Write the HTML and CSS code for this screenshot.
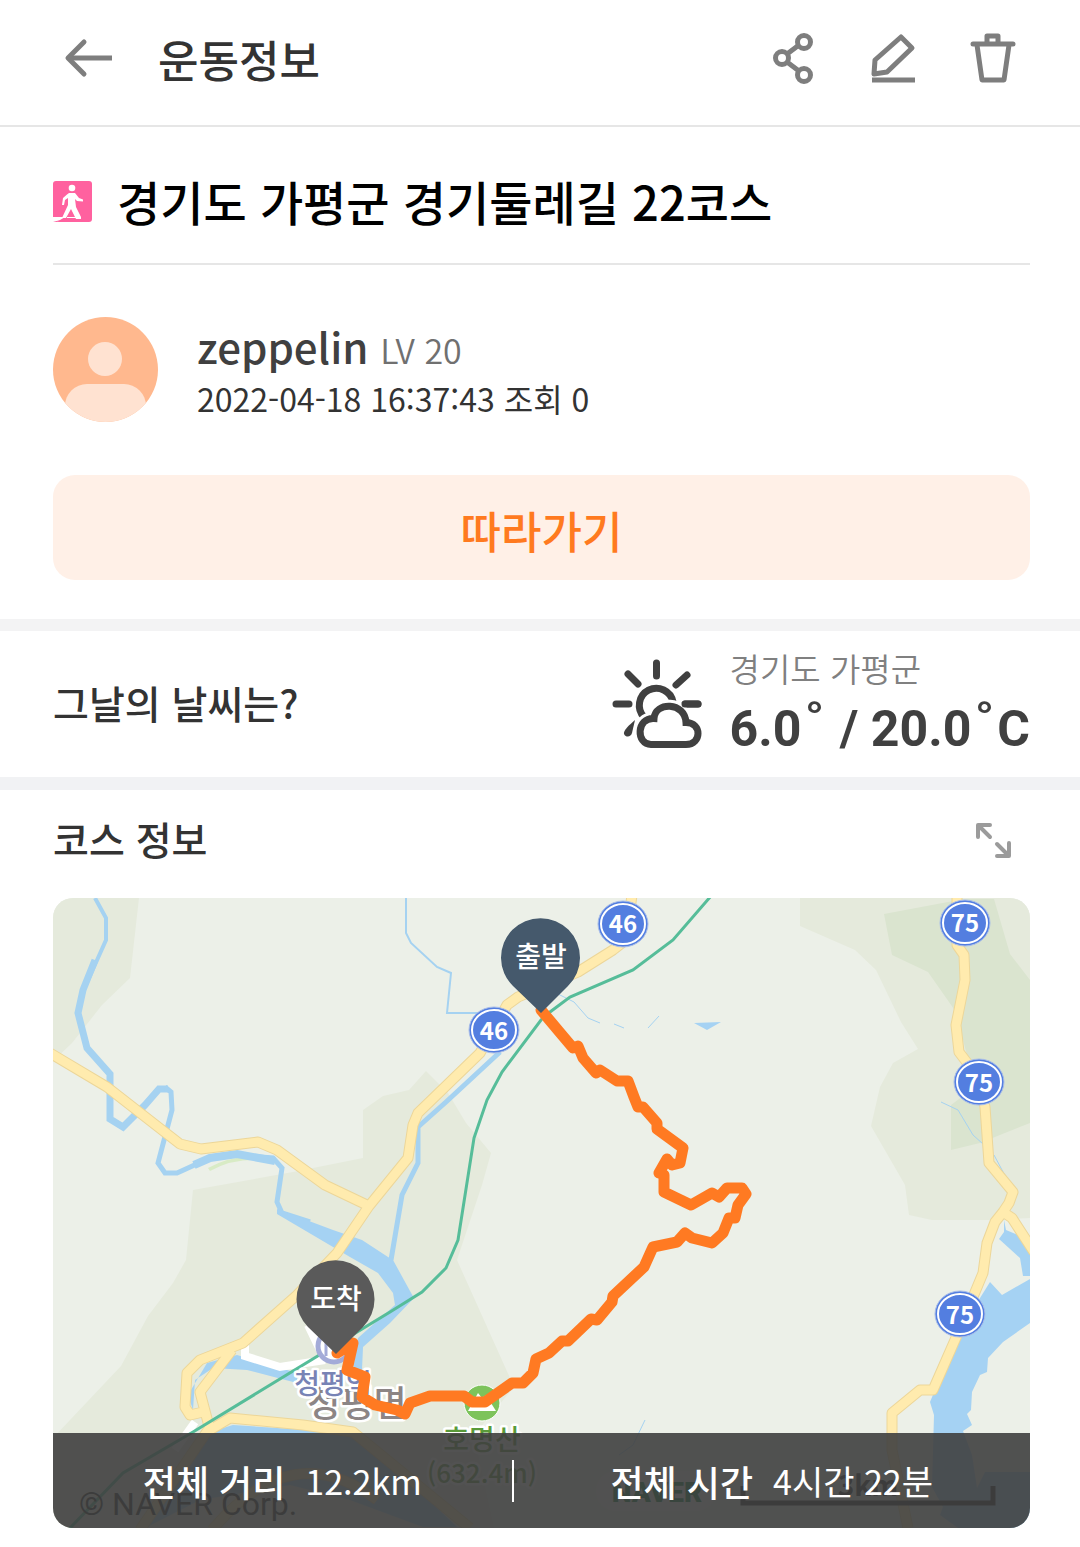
FILE: index.html
```html
<!DOCTYPE html>
<html lang="ko">
<head>
<meta charset="utf-8">
<meta name="viewport" content="width=device-width, initial-scale=1">
<title>운동정보</title>
<link rel="stylesheet" href="styles.css">
</head>
<body>
<header class="topbar">
  <button class="icon-button" type="button" aria-label="뒤로">
    <svg width="48" height="52" viewBox="0 0 48 52" fill="none" stroke="#7e7e7e" stroke-width="5"><path d="M48 25H5"/><path d="M20 9L4 25l16 16" stroke-linecap="round" stroke-linejoin="round"/></svg>
  </button>
  <h1 class="topbar-title">운동정보</h1>
  <div class="topbar-actions">
    <button class="icon-button" type="button" aria-label="공유">
      <svg width="48" height="52" viewBox="0 0 48 52" fill="none" stroke="#7e7e7e" stroke-width="5"><circle cx="14" cy="25" r="6.500"/><circle cx="36" cy="9" r="6.500"/><circle cx="36" cy="42" r="6.500"/><path d="M19 21l12-9M19 29l12 9"/></svg>
    </button>
    <button class="icon-button" type="button" aria-label="수정">
      <svg width="48" height="52" viewBox="0 0 48 52" fill="none" stroke="#7e7e7e" stroke-width="5" stroke-linejoin="round"><path d="M33 4l11 11-25 24-13 2 1-14z"/><path d="M4 47h43"/></svg>
    </button>
    <button class="icon-button" type="button" aria-label="삭제">
      <svg width="48" height="52" viewBox="0 0 48 52" fill="none" stroke="#7e7e7e" stroke-width="5" stroke-linejoin="round" stroke-linecap="round"><path d="M5 11h40M19 10V3h11v7M9 12l5 35h22l5-35"/></svg>
    </button>
  </div>
</header>

<main>
  <article class="post">
    <div class="post-heading">
      <svg class="walk-icon" width="39" height="41" viewBox="0 0 39 41"><rect width="39" height="41" rx="3" fill="#ff619f"/><circle cx="19" cy="7" r="3.300" fill="#fff"/><path d="M16 12h6l4 5 4 1.500v2l-6-.500-2-2 1 8 5 10v2h-5l-5-10-5 9h-4l6-13v-7l-3 2-1 5H9l1-7 4-3.500z" fill="#fff"/><path d="M0 36h12l-8 5H0z" fill="#fff"/><path d="M0 41h4l7-3z" fill="#ff619f"/><path d="M14 36.500h14" stroke="#fff"/></svg>
      <h2 class="post-title">경기도 가평군 경기둘레길 22코스</h2>
    </div>
    <div class="author">
      <svg class="avatar" width="105" height="105" viewBox="0 0 105 105"><clipPath id="avatar-clip"><circle cx="52.500" cy="52.500" r="52.500"/></clipPath><g clip-path="url(#avatar-clip)"><path fill="#ffb88e" d="M0 0h105v105H0z"/><circle cx="52" cy="42" r="17" fill="#ffe2d1"/><rect x="12" y="67" width="81" height="60" rx="22" fill="#ffe2d1"/></g></svg>
      <div class="author-text">
        <p class="author-name"><strong>zeppelin</strong> <span class="level">LV 20</span></p>
        <p class="author-meta">2022-04-18 16:37:43 조회 0</p>
      </div>
    </div>
    <button class="follow" type="button">따라가기</button>
  </article>

  <section class="weather">
    <h2 class="section-title">그날의 날씨는?</h2>
    <svg class="weather-icon" width="90" height="90" viewBox="0 0 90 90" fill="none" stroke="#404040" stroke-width="7" stroke-linecap="round"><path d="M44.500 4v13M16 15l10 10M75 16L64 26M4 45h13M73 45h13"/><path d="M32 58a17 17 0 1 1 29-15" stroke-linecap="butt"/><path d="M39 85.500h35c16 0 16-22 0-22-1-21-31-21-32-4-18-1-18 26-3 26z" stroke="#fff" stroke-width="13"/><path d="M39 85.500h35c16 0 16-22 0-22-1-21-31-21-32-4-18-1-18 26-3 26z" fill="#fff"/><path d="M73 45h13"/><path d="M23 61c-6 5-12 11-11 14 2 4 7 3 8-1z" fill="#404040" stroke="none"/></svg>
    <div class="weather-data">
      <p class="place">경기도 가평군</p>
      <p class="temperature">6.0<span class="degree">˚</span> / 20.0<span class="degree">˚</span>C</p>
    </div>
  </section>

  <section class="course">
    <div class="course-heading">
      <h2 class="section-title">코스 정보</h2>
      <button class="icon-button" type="button" aria-label="지도 확대">
        <svg width="36" height="36" viewBox="0 0 36 36" fill="none" stroke="#9b9b9b" stroke-width="4" stroke-linecap="round" stroke-linejoin="round"><path d="M2 15V3h12M3 4l11 11M33 21v13H21M32 33L21 22"/></svg>
      </button>
    </div>
    <div class="map">
      <svg class="map-canvas" viewBox="53 898 977 630" preserveAspectRatio="xMidYMid slice" role="img" aria-label="코스 지도">
        <path class="land" d="M53 898h977v630H53z"/>
        <g class="hills">
          <path d="M53 898h86l-9 80-28 27-30 38-19 18z"/>
          <path d="M800 898h230v320l-38 2h-60l-23-5-4-30-34-59 9-39 13-24 25-14-17-27-25-52-21-20-55-24z"/>
          <path d="M363 1110l20-14 26-6 17-19 22 22 18 30 25 30-9 32-25 75 57 127-40 48 20 93H53v-90l68-72 27-50 25-33 13-23 7-70 100-18 70-14z"/>
        </g>
        <path class="forest" d="M884 914l80-15h30l16 55 20 26v143l-50 20-29 7v-45l24-18-19-75-28-40-36-17z"/>
        <path class="park" d="M208 1168q30-16 55-8-30-2-53 11z"/>
        <g class="water-line">
          <path stroke-width="4" d="M95 898L106 918V940L85 987"/>
          <path stroke-width="7" d="M95 960L83 990L78 1013L87 1048L110 1074V1119L123 1127L145 1105L159 1089H168"/>
          <path stroke-width="5" d="M165 1087L171 1092L172 1110L158 1163L165 1173H177L210 1158L237 1155L273 1158L282 1168L277 1202L282 1213L310 1222"/>
          <path stroke-width="8" d="M194 1165L210 1158L237 1154L275 1161"/>
          <path stroke-width="5" d="M500 1052L446 1102L418 1127V1163L402 1195L391 1260"/>
          <path stroke-width="2" d="M406 898V933L411 943L437 967L451 973L447 1013H480"/>
          <path stroke-width="1" d="M558 994L574 1002L588 1018L600 1023M614 1024L624 1028M648 1028L659 1016M645 1420L633 1445L619 1455M941 1102L958 1110L973 1135L983 1144M994 1155L1009 1183"/>
        </g>
        <g class="water">
          <path d="M277 1209L333 1230L362 1240L388 1257L393 1260L410 1291L414 1298L390 1323L363 1347L362 1370H353L358 1338L395 1305L393 1293L378 1273L350 1257L277 1214z"/>
          <path d="M207 1363L237 1355L297 1373V1383L247 1370L213 1368L195 1380L193 1410L188 1395z"/>
          <path d="M210 1432L233 1425L353 1433L390 1463L457 1527H423L350 1500L290 1485L200 1500L147 1527z"/>
          <path d="M694 1023l27-1-14 8z"/>
          <path d="M999 1239L1004 1232V1220L1006 1230L1030 1240V1276H1023L1020 1258z"/>
          <path d="M990 1282L1002 1295L1030 1279V1323L1003 1342L988 1358L987 1372L980 1375L972 1392L971 1410L967 1414L972 1425L963 1431L972 1455L977 1488L985 1472H1030V1528H958L940 1515L943 1507L932 1487L934 1415L930 1402L960 1330z"/>
        </g>
        <g class="street"><path d="M245 1345V1356L280 1367L325 1360M195 1422L175 1450M308 1325L320 1350"/></g>
        <g class="road road-edge">
          <path id="road-a" d="M50 1053L107 1087L180 1144L201 1149L258 1142L277 1150L325 1185L369 1206"/>
          <path id="road-b" d="M632 895L626 940L613 950L578 972L518 997L507 1005L480 1053L418 1113L413 1125L408 1158L369 1206L337 1253L297 1295L243 1343L200 1360L187 1373L185 1407L190 1415L203 1412M232 1350L200 1392L210 1430L230 1418L303 1425L353 1432L470 1528"/>
          <path id="road-c" d="M957 895V945L964 955L965 980L956 1025L959 1052L978 1077L985 1107L989 1163L1013 1192L1009 1203L1003 1212L995 1222L987 1243L983 1273L958 1333L933 1390H920L892 1413V1450L908 1528M1003 1212L1012 1218L1034 1252"/>
          <path id="road-d" d="M208 1430L140 1530M212 1530q80-95 165-30"/>
        </g>
        <g class="road"><use href="#road-a"/><use href="#road-b"/><use href="#road-c"/><use href="#road-d"/></g>
        <path class="rail" d="M711 896L673 940L633 970L570 997L550 1012L541 1020L502 1072L487 1100L474 1138L458 1240L446 1268L422 1292L390 1312L193 1432L123 1473L70 1528"/>
        <g class="shields">
          <g id="shield"><ellipse class="shield-rim" cx="623" cy="924" rx="25" ry="23"/><ellipse class="shield-face" cx="623" cy="924" rx="22" ry="20"/></g>
          <use href="#shield" x="-129" y="106"/><use href="#shield" x="342" y="-1"/><use href="#shield" x="356" y="158"/><use href="#shield" x="337" y="390"/>
          <text x="623" y="933">46</text><text x="494" y="1040">46</text><text x="965" y="932">75</text><text x="979" y="1092">75</text><text x="960" y="1324">75</text>
        </g>
        <text class="label town" x="357" y="1417">청평면</text>
        <circle cx="334" cy="1346" r="16" fill="#fff" stroke="#a3abd8" stroke-width="5"/><path d="M326 1336v20M334 1344v8" stroke="#a3abd8" stroke-width="3"/>
        <text class="label station" x="333" y="1394">청평역</text>
        <circle cx="482" cy="1403" r="18" fill="#7dc35b" stroke="#fff"/><path d="M468 1411l10-18 4 5 4-3 10 16z" fill="#fff"/>
        <text class="label peak" x="482" y="1450">호명산</text><text class="label height" x="482" y="1483">(632.4m)</text>
        <text class="credit" x="79" y="1515">© NAVER Corp.</text>
        <rect x="596" y="1471" width="120" height="40" rx="20" fill="#fff" opacity=".3"/><text class="naver" x="657" y="1502">NAVER</text>
        <path d="M743 1486v17h250v-17" fill="none" stroke="#222" stroke-width="5"/><text class="scale" x="868" y="1496">3km</text>
        <path class="route" d="M541 1010L562 1035L573 1048L578 1046L583 1058L596 1073L600 1070L617 1081H628L634 1097L638 1107L643 1107L657 1123V1129L683 1148L680 1163L672 1165L667 1159L659 1173L664 1175V1192L691 1205L712 1193L719 1197L727 1188H742L746 1194L738 1205L735 1218H729L723 1233L712 1243L692 1238L685 1233L677 1242L653 1247L644 1267L613 1296L612 1302L597 1320L591 1319L568 1341H562L549 1353L536 1359L533 1373L523 1383H512L485 1402H472L464 1396H430L410 1403L405 1414L397 1410L375 1405L362 1397L365 1377L347 1370L353 1343L337 1353"/>
        <path fill="#45596c" d="M541 1013l-28-27a39.500 39.500 0 1 1 55 0z"/>
        <path fill="#5a5a5a" d="M336 1354l-28-27a39 39 0 1 1 55 0z"/>
        <text class="pin" x="541" y="967">출발</text><text class="pin" x="336" y="1309">도착</text>
      </svg>
      <dl class="summary">
        <div class="stat"><dt>전체 거리</dt><dd>12.2km</dd></div>
        <div class="stat"><dt>전체 시간</dt><dd>4시간 22분</dd></div>
      </dl>
    </div>
  </section>
</main>
</body>
</html>
```
FILE: styles.css
```css
* { box-sizing: border-box; }

body {
  margin: 0;
  background: #fff;
  color: #333;
  font-family: "Noto Sans CJK KR", sans-serif;
}

h1, h2, p, dl, dd { margin: 0; font-weight: 500; }
svg { display: block; flex: none; }
button { border: 0; cursor: pointer; font-family: inherit; }
.icon-button { padding: 0; background: none; }

.topbar {
  display: flex;
  align-items: center;
  height: 127px;
  padding: 0 64px 8px;
  border-bottom: 2px solid #e6e6e6;
}
.topbar-title { margin-left: 46px; font-size: 44px; line-height: 64px; }
.topbar-actions { display: flex; gap: 52px; margin-left: auto; }

.post { padding: 0 50px 39px 53px; }
.post-heading {
  display: flex;
  align-items: center;
  gap: 25px;
  height: 138px;
  padding-top: 12px;
  border-bottom: 2px solid #e6e6e6;
}
.post-title { color: #000; font-size: 47px; line-height: 64px; }

.author { display: flex; align-items: center; gap: 39px; padding: 52px 0 53px; }
.author-name { color: #404040; font-size: 42px; line-height: 52px; }
.author-name strong { font-weight: 500; }
.level { color: #707070; font-size: 34px; font-weight: 350; }
.author-meta { font-size: 32px; font-weight: 400; line-height: 44px; }

.follow {
  display: block;
  width: 100%;
  height: 105px;
  padding: 4px 0 0;
  border-radius: 22px;
  background: #fff0e7;
  color: #ff7a1f;
  font-size: 44px;
  font-weight: 500;
}

.weather {
  display: flex;
  align-items: center;
  height: 171px;
  padding: 0 50px 0 53px;
  border-top: 12px solid #f3f3f4;
  border-bottom: 13px solid #f1f2f4;
}
.section-title { padding-bottom: 4px; font-size: 39px; line-height: 56px; }
.weather-icon { margin: 0 28px 0 auto; }
.weather-data { padding-bottom: 4px; }
.place { color: #808080; font-size: 33px; font-weight: 350; line-height: 54px; }
.temperature {
  color: #404040;
  font-family: Roboto, "Noto Sans CJK KR", sans-serif;
  font-size: 50px;
  font-weight: 700;
  line-height: 68px;
}
.degree { margin: 0 3px; font-size: 60px; line-height: 40px; }

.course { padding: 0 50px 20px 53px; }
.course-heading {
  display: flex;
  align-items: center;
  justify-content: space-between;
  height: 108px;
  padding: 0 18px 8px 0;
}

.map { position: relative; overflow: hidden; border-radius: 20px; }
.map-canvas { width: 100%; height: auto; }
.land { fill: #ecf0e8; }
.hills { fill: #e5eadc; }
.forest { fill: #dae4cf; }
.park { fill: #d8ebc5; }
.water { fill: #a5d2f3; }
.water-line { fill: none; stroke: #a5d2f1; }
.road { fill: none; stroke: #ffebae; stroke-width: 9; stroke-linejoin: round; }
.road-edge { stroke: #ecd699; stroke-width: 11; }
.street { fill: none; stroke: #fff; stroke-width: 8; }
.rail { fill: none; stroke: #56bd99; stroke-width: 3; }
.route { fill: none; stroke: #ff7a22; stroke-width: 11; stroke-linecap: round; stroke-linejoin: round; }
.shield-rim { fill: #537ee0; stroke: #a9bee9; stroke-width: 1; }
.shield-face { fill: #537ee0; stroke: #fff; stroke-width: 2; }
.map text { text-anchor: middle; }
.shields text { fill: #fff; font-size: 24px; font-weight: 700; }
.label { font-weight: 500; stroke: #fff; stroke-width: 5; paint-order: stroke; stroke-linejoin: round; }
.town { fill: #8c8585; font-size: 36px; }
.station { fill: #7883b5; font-size: 28px; }
.peak, .height { fill: #5a9a3a; font-size: 28px; }
.height { font-size: 26px; }
.map .credit { fill: #222; font-family: Roboto, sans-serif; font-size: 32px; text-anchor: start; }
.naver { fill: #087a32; font-family: Roboto, sans-serif; font-size: 28px; font-weight: 900; }
.scale { fill: #222; font-size: 28px; font-weight: 700; }
.pin { fill: #fff; font-size: 28px; font-weight: 500; }

.summary {
  position: absolute;
  right: 0;
  bottom: 0;
  left: 0;
  display: flex;
  align-items: center;
  height: 95px;
  background: rgb(63 63 63 / 90%);
  color: #fff;
  font-size: 36px;
  line-height: 42px;
}
.stat { display: flex; flex: 458px; justify-content: center; gap: 20px; }
.stat + .stat { flex-basis: 518px; border-left: 2px solid #fff; }
.stat dt { font-weight: 500; }
.stat dd { font-size: 34px; font-weight: 400; }
```
